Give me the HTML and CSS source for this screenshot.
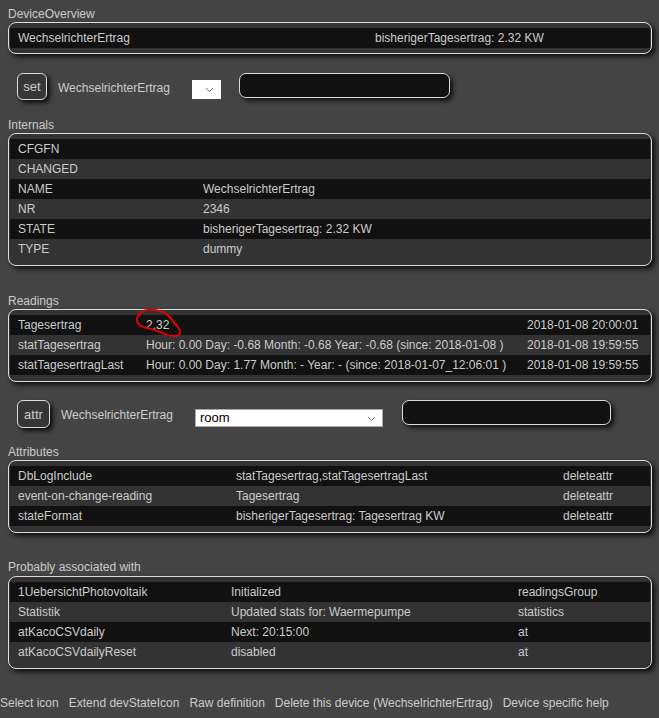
FILE: index.html
```html
<!DOCTYPE html>
<html>
<head>
<meta charset="utf-8">
<link rel="stylesheet" href="styles.css">
</head>
<body>
<div class="page">
  <div class="label first">DeviceOverview</div>
  <div class="block tight">
    <table class="tbl">
      <colgroup><col class="c357"><col></colgroup>
      <tr class="odd"><td>WechselrichterErtrag</td><td>bisherigerTagesertrag: 2.32 KW</td></tr>
    </table>
  </div>

  <div class="cmdrow setrow">
    <div class="btn btn-set">set</div>
    <div class="cmdlabel">WechselrichterErtrag</div>
    <div class="sel sel-small"><svg class="chev" width="9" height="6" viewBox="0 0 9 6"><polyline points="1,1 4.5,4.5 8,1" fill="none" stroke="#777" stroke-width="1"/></svg></div>
    <div class="txt txt-set"></div>
  </div>

  <div class="label sec">Internals</div>
  <div class="block">
    <table class="tbl">
      <colgroup><col class="c185"><col></colgroup>
      <tr class="odd"><td>CFGFN</td><td></td></tr>
      <tr class="even"><td>CHANGED</td><td></td></tr>
      <tr class="odd"><td>NAME</td><td>WechselrichterErtrag</td></tr>
      <tr class="even"><td>NR</td><td>2346</td></tr>
      <tr class="odd"><td>STATE</td><td>bisherigerTagesertrag: 2.32 KW</td></tr>
      <tr class="even"><td>TYPE</td><td>dummy</td></tr>
    </table>
  </div>

  <div class="label sec-readings">Readings</div>
  <div class="block">
    <table class="tbl">
      <colgroup><col class="c128"><col class="c381"><col></colgroup>
      <tr class="odd"><td>Tagesertrag</td><td class="marked">2.32<svg class="scribble" width="60" height="40" viewBox="0 0 60 40"><path d="M10,9 C12,4 22,4 30,6 C38,8 42,15 47,21 C51,26 52,30 45,31 C37,32 30,26 22,24 C15,23 7,21 7,15 C7,11 9,9 11,8" fill="none" stroke="#e00000" stroke-width="2" stroke-linecap="round"/></svg></td><td>2018-01-08 20:00:01</td></tr>
      <tr class="even"><td>statTagesertrag</td><td>Hour: 0.00 Day: -0.68 Month: -0.68 Year: -0.68 (since: 2018-01-08 )</td><td>2018-01-08 19:59:55</td></tr>
      <tr class="odd"><td>statTagesertragLast</td><td>Hour: 0.00 Day: 1.77 Month: - Year: - (since: 2018-01-07_12:06:01 )</td><td>2018-01-08 19:59:55</td></tr>
    </table>
  </div>

  <div class="cmdrow attrrow">
    <div class="btn btn-attr">attr</div>
    <div class="cmdlabel">WechselrichterErtrag</div>
    <div class="sel sel-room"><span>room</span><svg class="chev" width="9" height="6" viewBox="0 0 9 6"><polyline points="1,1 4.5,4.5 8,1" fill="none" stroke="#777" stroke-width="1"/></svg></div>
    <div class="txt txt-attr"></div>
  </div>

  <div class="label sec-attr">Attributes</div>
  <div class="block">
    <table class="tbl">
      <colgroup><col class="c218"><col class="c327"><col></colgroup>
      <tr class="odd"><td>DbLogInclude</td><td>statTagesertrag,statTagesertragLast</td><td>deleteattr</td></tr>
      <tr class="even"><td>event-on-change-reading</td><td>Tagesertrag</td><td>deleteattr</td></tr>
      <tr class="odd"><td>stateFormat</td><td>bisherigerTagesertrag: Tagesertrag KW</td><td>deleteattr</td></tr>
    </table>
  </div>

  <div class="label sec-assoc">Probably associated with</div>
  <div class="block">
    <table class="tbl">
      <colgroup><col class="c213"><col class="c287"><col></colgroup>
      <tr class="odd"><td>1UebersichtPhotovoltaik</td><td>Initialized</td><td>readingsGroup</td></tr>
      <tr class="even"><td>Statistik</td><td>Updated stats for: Waermepumpe</td><td>statistics</td></tr>
      <tr class="odd"><td>atKacoCSVdaily</td><td>Next: 20:15:00</td><td>at</td></tr>
      <tr class="even"><td>atKacoCSVdailyReset</td><td>disabled</td><td>at</td></tr>
    </table>
  </div>
</div>
<div class="links">
  <a>Select icon</a>
  <a>Extend devStateIcon</a>
  <a>Raw definition</a>
  <a>Delete this device (WechselrichterErtrag)</a>
  <a>Device specific help</a>
</div>
</body>
</html>
```

FILE: styles.css
```css
html, body {
  margin: 0;
  padding: 0;
  background: #444444;
}
body {
  font-family: "Liberation Sans", Arial, sans-serif;
  font-size: 12px;
  color: #cccccc;
  width: 659px;
  height: 718px;
  overflow: hidden;
}
.page {
  padding: 7px 7px 0 8px;
}
.label {
  height: 14px;
  line-height: 14px;
  margin-bottom: 1px;
}
.sec { margin-top: 18px; }
.sec-readings { margin-top: 28px; }
.sec-attr { margin-top: 17px; }
.sec-assoc { margin-top: 27px; margin-bottom: 2px; }

.block {
  border: 1px solid #dddddd;
  border-radius: 8px;
  background: #333333;
  padding: 5px 1px 6px 1px;
  box-shadow: 3px 3px 5px #111111;
}
.block.tight { padding-bottom: 5px; }

.tbl {
  width: 100%;
  border-collapse: collapse;
  table-layout: fixed;
}
.tbl td {
  padding: 0 8px;
  height: 20px;
  line-height: 20px;
  white-space: nowrap;
  overflow: visible;
  vertical-align: middle;
}
.tbl tr.odd { background: #111111; }
.tbl tr.even { background: #333333; }

.c357 { width: 357px; }
.c185 { width: 185px; }
.c128 { width: 128px; }
.c381 { width: 381px; }
.c218 { width: 218px; }
.c327 { width: 327px; }
.c213 { width: 213px; }
.c287 { width: 287px; }

.marked { position: relative; }
.scribble {
  position: absolute;
  left: -8px;
  top: -10px;
  pointer-events: none;
}

.cmdrow {
  display: flex;
  align-items: flex-start;
  padding-left: 9px;
}
.setrow { margin-top: 19px; }
.attrrow { margin-top: 18px; }

.btn {
  box-sizing: border-box;
  border: 1.5px solid #dddddd;
  border-radius: 6px;
  background: #363636;
  color: #cccccc;
  font-size: 13px;
  display: flex;
  align-items: center;
  justify-content: center;
  box-shadow: 3px 3px 4px #111111;
}
.btn-set { width: 30px; height: 27px; }
.btn-attr { width: 33px; height: 28px; }

.cmdlabel {
  line-height: 14px;
  margin-top: 8px;
  margin-left: 11px;
  width: 134px;
  white-space: nowrap;
}

.sel {
  box-sizing: border-box;
  background: #ffffff;
  position: relative;
  color: #000000;
  font-size: 13px;
}
.sel-small {
  width: 29px;
  height: 19px;
  margin-top: 7px;
}
.sel-room {
  width: 188px;
  height: 18px;
  margin-top: 9px;
  border: 1px solid #a9a9a9;
  line-height: 16px;
  padding-left: 4px;
}
.chev {
  position: absolute;
  right: 7px;
  top: 7px;
}
.sel-room .chev { right: 6px; top: 6px; }

.txt {
  box-sizing: border-box;
  background: #111111;
  border: 1px solid #dddddd;
  border-radius: 7px;
  height: 25px;
  box-shadow: 3px 3px 4px #111111;
}
.txt-set { width: 211px; margin-left: 18px; }
.txt-attr { width: 209px; margin-left: 19px; }

.links {
  margin-top: 27px;
  display: flex;
  gap: 10px;
  line-height: 14px;
  padding-left: 0;
}
.links a {
  color: #cccccc;
  text-decoration: none;
}
```
